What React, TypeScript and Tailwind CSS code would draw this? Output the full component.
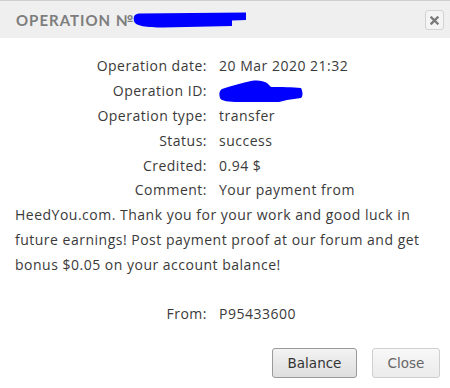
import React from "react";

const rows: [string, React.ReactNode][] = [
  ["Operation date:", "20 Mar 2020 21:32"],
  ["Operation ID:", "id"],
  ["Operation type:", "transfer"],
  ["Status:", "success"],
  ["Credited:", "0.94 $"],
];

const HeaderScribble = () => (
  <svg width="114" height="16" viewBox="0 0 114 16" className="inline-block align-middle -ml-px">
    <path
      d="M6 1.5 L113 0.5 L113 8 L99 8.5 L99 14 L30 15.5 C14 15.5 2 14 1 9 C0 4 2 2 6 1.5 Z"
      fill="#0000ff"
    />
  </svg>
);

const IdScribble = () => (
  <svg width="84" height="24" viewBox="0 0 84 24" className="inline-block align-middle">
    <path
      d="M3 9 C12 6 22 3 32 1 C40 0 44 1 48 3 L52 7 C62 7 74 7 82 8 C84 12 84 16 82 18 L68 20 L60 22 L20 22 C10 22 2 21 1 18 C0 14 0 11 3 9 Z"
      fill="#0000ff"
    />
  </svg>
);

const Row = ({ label, children }: { label: string; children: React.ReactNode }) => (
  <div>
    <span className="inline-block w-[192px] text-right">{label}</span>
    <span className="ml-3">{children}</span>
  </div>
);

export default function App() {
  return (
    <div className="w-[450px] h-[388px] bg-white border-t border-[#cfcfcf] relative overflow-hidden">
      <div className="h-[37px] bg-[#efefef] flex items-center pl-4 pr-[6px]">
        <div className="flex-1 flex items-center text-[15px] font-bold tracking-[1px] text-[#7d7d7d] font-['Lato',sans-serif] pt-px">
          <span>OPERATION №</span>
          <HeaderScribble />
        </div>
        <button className="w-[19px] h-[20px] mt-px border border-[#d3d3d3] rounded-[3px] bg-[#f4f4f4] flex items-center justify-center">
          <svg width="9" height="9" viewBox="0 0 9 9">
            <path d="M1.5 1.5 L7.5 7.5 M7.5 1.5 L1.5 7.5" stroke="#7a7a7a" strokeWidth="2.4" strokeLinecap="square" />
          </svg>
        </button>
      </div>

      <div className="pt-[16px] pl-[15px] pr-[12px] text-[14px] leading-[24.8px] tracking-[0.5px] text-[#3a3a3a] font-['Open_Sans',sans-serif]">
        {rows.map(([label, value]) => (
          <Row key={label} label={label}>
            {value === "id" ? <IdScribble /> : value}
          </Row>
        ))}
        <p>
          <span className="inline-block w-[192px] text-right">Comment:</span>
          <span className="ml-3">
            Your payment from HeedYou.com. Thank you for your work and good luck in future earnings! Post payment
            proof at our forum and get bonus $0.05 on your account balance!
          </span>
        </p>
        <div className="h-[24.8px]" />
        <Row label="From:">P95433600</Row>
      </div>

      <div className="absolute right-[10px] bottom-[10px] flex gap-[15px] text-[13.5px] font-['DejaVu_Sans',sans-serif]">
        <button className="w-[85px] h-[30px] rounded-[3px] border border-[#9a9a9a] bg-gradient-to-b from-[#f3f3f3] to-[#dedede] text-[#333]">
          Balance
        </button>
        <button className="w-[68px] h-[30px] rounded-[3px] border border-[#cfcfcf] bg-gradient-to-b from-[#f8f8f8] to-[#ebebeb] text-[#666]">
          Close
        </button>
      </div>
    </div>
  );
}
